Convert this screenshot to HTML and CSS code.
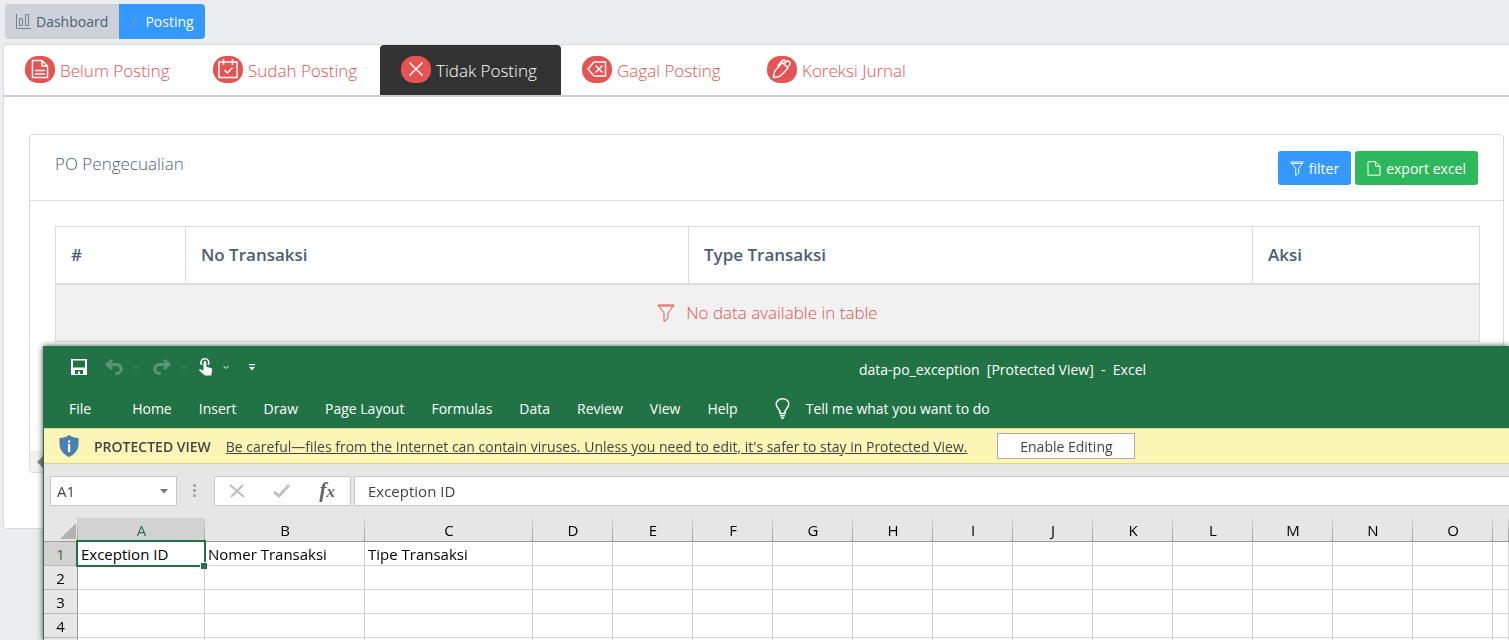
FILE: index.html
```
<!DOCTYPE html>
<html lang="id">
<head>
<meta charset="utf-8">
<title>Posting</title>
<link rel="stylesheet" href="styles.css">
</head>
<body>
<nav class="breadcrumb" aria-label="Breadcrumb">
  <a class="crumb" href="#">
    <svg class="crumb-icon" width="15" height="15" viewBox="0 0 15 15"><path d="M.5 0v14.5H15M3.500 4.500h3v7h-3zM9.500 .5h3v11h-3z"/></svg>
    Dashboard</a>
  <a class="crumb crumb-active" href="#"><span class="slash">/</span>Posting</a>
</nav>

<main class="panel">
  <nav class="tabs">
    <a class="tab" href="#"><span class="pill"><svg width="20" height="20" viewBox="0 0 20 20"><path d="M2.500 1.500h9.500l5.500 5.500v11.500h-15zM12 1.500v5.500h5.500M5 11.500h10M5 15h10"/></svg></span>Belum Posting</a>
    <a class="tab" href="#"><span class="pill"><svg width="20" height="20" viewBox="0 0 20 20"><path d="M1 3h18v15.500h-18zM5.500 0v6M14.500 0v6M6.500 11l3 3 5-5.500"/></svg></span>Sudah Posting</a>
    <a class="tab tab-active" href="#" aria-current="page"><span class="pill"><svg width="20" height="20" viewBox="0 0 20 20"><path d="M3.500 3.500l13 13M16.500 3.500l-13 13"/></svg></span>Tidak Posting</a>
    <a class="tab" href="#"><span class="pill"><svg width="20" height="20" viewBox="0 0 20 20"><path d="M7 3h11.500v14h-11.500l-6-7zM8.500 6.500l7 7M15.500 6.500l-7 7"/></svg></span>Gagal Posting</a>
    <a class="tab" href="#"><span class="pill"><svg width="20" height="20" viewBox="0 0 20 20"><path d="M1.500 18.500c0-4 1-6.500 3-8.500l6-6.500 5.500 5.500-6 6.500c-2 2-4.500 3-8.500 3zM12 5l2-2.200c2.300-2 5.500 1 3.300 3.400L15 8.200M5.500 7l5-5.500c.8-.8 1.500-.8 2.500 0l1 1"/></svg></span>Koreksi Jurnal</a>
  </nav>

  <section class="card">
    <header class="card-head">
      <h1 class="card-title">PO Pengecualian</h1>
      <div class="actions">
        <button class="btn btn-blue" type="button"><svg width="14" height="15" viewBox="0 0 14 15"><path d="M.7 1h12.600l-4.600 6.500v4.500l-3 2.300v-6.800zM2 2.500h10"/></svg>filter</button>
        <button class="btn btn-green" type="button"><svg width="14" height="15" viewBox="0 0 14 15"><path d="M1 .7h7.500l4.500 4.500v9h-12zM8.500 .7v4.500h4.500"/></svg>export excel</button>
      </div>
    </header>
    <div class="card-body">
      <table class="data">
        <colgroup><col class="c-no"><col class="c-trx"><col class="c-type"><col></colgroup>
        <thead><tr><th>#</th><th>No Transaksi</th><th>Type Transaksi</th><th>Aksi</th></tr></thead>
        <tbody><tr><td colspan="4"><div class="empty"><svg width="18" height="18" viewBox="0 0 18 18"><path d="M1 1h16l-6 8v5.500l-4 3v-8.500zM2 2h14"/></svg>No data available in table</div></td></tr></tbody>
      </table>
    </div>
    <div class="scroll"><svg width="6" height="12" viewBox="0 0 6 12"><path d="M6 0v12L0 6z"/></svg></div>
  </section>
</main>

<section class="excel" aria-label="Excel">
  <div class="titlebar">
    <div class="quick">
      <svg class="q-save" width="16" height="16" viewBox="0 0 16 16"><path fill-rule="evenodd" d="M0 0h16v16h-16zM2 1.500v7h12v-7zM4 11v4h3v-2.500h2v2.500h3v-4z"/></svg>
      <svg class="q-line dim q-undo" width="18" height="16" viewBox="0 0 18 16"><path d="M7 1L2 5.500 7 10M2.500 5.500h9c6.500 0 6 9 0 9h-1"/></svg>
      <svg class="q-chev dim" width="6" height="5" viewBox="0 0 6 5"><path d="M.5 1L3 3.500 5.500 1"/></svg>
      <svg class="q-line dim q-redo" width="18" height="16" viewBox="0 0 18 16"><path d="M11 1l5 4.500L11 10M15.500 5.500h-9c-6.500 0-6 9 0 9h1"/></svg>
      <svg class="q-chev dim" width="6" height="5" viewBox="0 0 6 5"><path d="M.5 1L3 3.500 5.500 1"/></svg>
      <svg class="q-touch" width="14" height="18" viewBox="0 0 14 18"><path d="M4.500 4.500c0-2 2.800-2 2.800 0v4.300l4.500 1.200c1 .3 1.500 1 1.300 2l-.9 5.500h-6.200L.5 12.800c-.8-1 .4-2 1.500-1.400l2.500 1.400z"/><path class="ring" d="M2.700 6.800C.5 3.500 3 .8 5.900.8s5.300 2.700 3.200 6"/></svg>
      <svg class="q-chev" width="6" height="5" viewBox="0 0 6 5"><path d="M.5 1L3 3.500 5.500 1"/></svg>
      <svg class="q-more" width="6" height="7" viewBox="0 0 6 7"><path d="M0 0h6v1.200h-6zM0 3h6L3 6.500z"/></svg>
    </div>
    <p class="doc">data-po_exception&nbsp; [Protected View]&nbsp; -&nbsp; Excel</p>
  </div>
  <nav class="ribbon">
    <a class="file" href="#">File</a><a href="#">Home</a><a href="#">Insert</a><a href="#">Draw</a><a href="#">Page Layout</a><a href="#">Formulas</a><a href="#">Data</a><a href="#">Review</a><a href="#">View</a><a href="#">Help</a>
    <a class="tell" href="#"><svg width="15" height="21" viewBox="0 0 15 21"><path d="M5 15.500v-2c0-2-3.800-3.500-3.800-7.300C1.200 3 4 .8 7.500.8s6.300 2.200 6.300 5.400c0 3.800-3.800 5.300-3.800 7.300v2zM5 17.800h5M6 20h3"/></svg>Tell me what you want to do</a>
  </nav>
  <div class="notice">
    <svg width="20" height="22" viewBox="0 0 20 22"><path fill="#4a7fb5" d="M10 0c2.500 2 6 3 9.500 3v6c0 6-4 10.500-9.500 13C4.500 19.500.5 15 .5 9V3c3.500 0 7-1 9.500-3z"/><path fill="#fff" d="M9 5.500h2.200v2.200H9zM9 9h2.200v8H9z"/></svg>
    <strong>PROTECTED VIEW</strong>
    <a href="#">Be careful—files from the Internet can contain viruses. Unless you need to edit, it's safer to stay in Protected View.</a>
    <button type="button">Enable Editing</button>
  </div>
  <div class="formula">
    <div class="namebox"><input aria-label="Name Box" value="A1"><svg width="8" height="5" viewBox="0 0 8 5"><path fill="#777" d="M0 0h8L4 4.500z"/></svg></div>
    <svg class="grip" width="4" height="14" viewBox="0 0 4 14"><path fill="#aaa" d="M0 0h3v3h-3zM0 5h3v3h-3zM0 10h3v3h-3z"/></svg>
    <div class="fx">
      <svg width="16" height="14" viewBox="0 0 16 14"><path d="M1 1l14 12M14 1L2 13" stroke="#bdbdbd" stroke-width="2" fill="none"/></svg>
      <svg width="18" height="14" viewBox="0 0 18 14"><path d="M1 8l5 4L16 1" stroke="#c3c3c3" stroke-width="3" fill="none"/></svg>
      <span class="fx-label">f<small>x</small></span>
    </div>
    <input class="fbar" aria-label="Formula Bar" value="Exception ID">
  </div>
  <table class="sheet">
    <colgroup><col class="s-row"><col class="s-a"><col class="s-b"><col class="s-c"><col span="12" class="s-n"><col></colgroup>
    <thead><tr><th class="corner"><svg width="16" height="16" viewBox="0 0 16 16"><path fill="#b2b2b2" d="M16 0v16H0z"/></svg></th><th class="sel">A</th><th>B</th><th>C</th><th>D</th><th>E</th><th>F</th><th>G</th><th>H</th><th>I</th><th>J</th><th>K</th><th>L</th><th>M</th><th>N</th><th>O</th><th></th></tr></thead>
    <tbody>
      <tr><th class="sel">1</th><td class="cursor">Exception ID</td><td>Nomer Transaksi</td><td>Tipe Transaksi</td><td></td><td></td><td></td><td></td><td></td><td></td><td></td><td></td><td></td><td></td><td></td><td></td><td></td></tr>
      <tr><th>2</th><td></td><td></td><td></td><td></td><td></td><td></td><td></td><td></td><td></td><td></td><td></td><td></td><td></td><td></td><td></td><td></td></tr>
      <tr><th>3</th><td></td><td></td><td></td><td></td><td></td><td></td><td></td><td></td><td></td><td></td><td></td><td></td><td></td><td></td><td></td><td></td></tr>
      <tr><th>4</th><td></td><td></td><td></td><td></td><td></td><td></td><td></td><td></td><td></td><td></td><td></td><td></td><td></td><td></td><td></td><td></td></tr>
      <tr><th></th><td></td><td></td><td></td><td></td><td></td><td></td><td></td><td></td><td></td><td></td><td></td><td></td><td></td><td></td><td></td><td></td></tr>
    </tbody>
  </table>
</section>
</body>
</html>
```
FILE: styles.css
```
* { box-sizing: border-box; }
body {
  margin: 0;
  padding: 4px 0 0 3px;
  background: #ebecee;
  color: #4f5d73;
  font-family: "Open Sans", "Noto Sans", sans-serif;
  font-size: 14px;
}
a { color: inherit; text-decoration: none; }
button, input { font: inherit; color: inherit; }
svg { flex: none; display: block; }

/* Breadcrumb */
.breadcrumb { display: flex; margin-left: 2px; height: 35px; }
.crumb {
  display: flex;
  align-items: center;
  gap: 5px;
  padding: 0 11px;
  background: #ced2d8;
  border-radius: 4px 0 0 4px;
}
.crumb-icon { fill: none; stroke: #768192; }
.crumb-active { gap: 10px; background: #39f; color: #fff; border-radius: 0 4px 4px 0; }
.slash { color: #8a93a2; }

/* Page panel and tabs */
.panel {
  margin-top: 5px;
  padding-bottom: 55px;
  background: #fff;
  border: 1px solid #d8dbe0;
  border-right: 0;
  border-radius: 4px 0 0 4px;
}
.tabs {
  display: grid;
  grid-template-columns: 188px 188px 181px 185px 185px;
  height: 52px;
  margin-left: -1px;
  padding-left: 1px;
  border-bottom: 2px solid #c8ccd3;
}
.tab {
  display: flex;
  align-items: center;
  gap: 5px;
  padding: 1px 0 0 21px;
  color: #e55353;
  font-size: 17px;
  font-weight: 300;
}
.tab-active { background: #333; color: #fff; border-radius: 4px 4px 0 0; }
.pill {
  display: flex;
  align-items: center;
  justify-content: center;
  width: 30px;
  height: 27px;
  margin-bottom: 3px;
  border-radius: 13px;
  background: #e55353;
}
.pill svg { fill: none; stroke: #fff; stroke-width: 1.5; }

/* Card */
.card { margin: 37px 5px 0 25px; border: 1px solid #d8dbe0; border-radius: 4px; }
.card-head {
  display: flex;
  justify-content: space-between;
  align-items: flex-start;
  height: 66px;
  padding: 16px 25px;
  border-bottom: 1px solid #d8dbe0;
}
.card-title { margin: 1px 0 0; font-size: 17px; line-height: 24px; font-weight: 300; }
.actions { display: flex; gap: 4px; }
.btn {
  display: flex;
  align-items: center;
  gap: 5px;
  height: 34px;
  padding: 0 12px;
  border: 0;
  border-radius: 3px;
  color: #fff;
}
.btn svg { fill: none; stroke: #fff; }
.btn-blue { background: #39f; }
.btn-green { background: #2eb85c; }
.card-body { height: 250px; padding: 25px 23px 0 25px; }
.data { width: 100%; table-layout: fixed; border-collapse: collapse; }
.data th, .data td { border: 1px solid #d8dbe0; }
.data th {
  height: 57px;
  padding: 0 15px;
  border-bottom-width: 2px;
  text-align: left;
  font-size: 17px;
  font-weight: 600;
}
.data td { height: 58px; background: #f1f1f1; }
.c-no { width: 130px; }
.c-trx { width: 503px; }
.c-type { width: 564px; }
.empty {
  display: flex;
  align-items: center;
  justify-content: center;
  gap: 11px;
  color: #e55353;
  font-size: 17px;
  font-weight: 300;
}
.empty svg { fill: none; stroke: #e55353; }
.scroll { display: flex; align-items: center; height: 21px; padding-left: 7px; background: #f1f1f1; }
.scroll svg { fill: #8a8a8a; }

/* Spreadsheet window */
.excel {
  position: fixed;
  top: 346px;
  right: 0;
  bottom: 0;
  left: 43px;
  overflow: hidden;
  border-left: 1px solid #217346;
  background: #e6e6e6;
  box-shadow: 0 0 6px rgba(0, 0, 0, .7);
  color: #444;
  font-size: 14px;
  white-space: nowrap;
}
.titlebar, .ribbon { background: #217346; color: #fff; }
.titlebar { display: grid; grid-template-columns: 404px 1fr; align-items: center; height: 43px; }
.quick { display: flex; align-items: center; padding: 0 0 1px 27px; fill: #fff; }
.q-line { fill: none; stroke: #fff; stroke-width: 3; }
.q-chev { fill: none; stroke: #fff; margin: 0 14px 0 10px; }
.q-undo { margin-left: 18px; }
.q-touch { margin-left: -2px; }
.q-chev + .q-more { margin-left: 6px; }
.ring { fill: none; stroke: #fff; stroke-width: 1.5; }
.dim { opacity: .25; }
.doc { justify-self: center; margin: 4px 0 0; padding-left: 48px; }
.ribbon { display: flex; align-items: center; gap: 27px; height: 39px; padding-left: 25px; }
.file { margin-right: 14px; }
.tell { display: flex; align-items: center; gap: 16px; margin-left: 10px; }
.tell svg { fill: none; stroke: #fff; stroke-width: 1.5; }
.notice {
  display: flex;
  align-items: center;
  height: 36px;
  padding-left: 15px;
  background: #fcf6b6;
  border: solid #dbd68f;
  border-width: 1px 0;
}
.notice strong { margin: 0 15px; font-weight: 600; }
.notice a { text-decoration: underline; }
.notice button {
  width: 138px;
  height: 26px;
  margin-left: 30px;
  padding: 0;
  background: #fdfdfd;
  border: 1px solid #ababab;
}
.formula { display: flex; align-items: center; height: 54px; padding-left: 6px; font-size: 15px; }
.namebox, .fx, .fbar { height: 30px; background: #fdfdfd; border: 1px solid #c6c6c6; border-radius: 0; }
.namebox { display: flex; align-items: center; width: 127px; padding: 0 8px 0 6px; }
.namebox input { flex: 1; min-width: 0; padding: 0; border: 0; background: none; }
.grip { margin: 0 17px 0 16px; }
.fx { display: flex; align-items: center; justify-content: space-between; width: 137px; padding: 0 15px 0 14px; margin-right: 3px; }
.fx-label { font: italic 700 22px/24px "Liberation Serif", serif; color: #666; }
.fx-label small { font-size: 17px; }
.fbar { flex: 1; padding: 0 13px; border-right: 0; }

/* Grid of cells */
.sheet {
  width: 100%;
  table-layout: fixed;
  border-collapse: separate;
  border-spacing: 0;
  color: #000;
  font-size: 15px;
  line-height: 20px;
}
.s-row { width: 34px; }
.s-a { width: 127px; }
.s-b { width: 160px; }
.s-c { width: 168px; }
.s-n { width: 80px; }
.sheet th { height: 24px; padding: 0; font-weight: 400; }
.sheet thead th {
  border-bottom: 1px solid #9b9b9b;
  background: linear-gradient(#d6d6d6, #9b9b9b) right / 1px 100% no-repeat;
}
.sheet .corner svg { margin: 3px 2px 0 auto; }
.sheet tbody th { border-right: 1px solid #9b9b9b; border-bottom: 1px solid #b8b8b8; }
.sheet thead .sel, .sheet tbody .sel { background-color: #d2d2d2; color: #217346; }
.sheet td {
  height: 24px;
  padding: 0 3px;
  background: #fff;
  border: solid #d4d4d4;
  border-width: 0 1px 1px 0;
}
.cursor { position: relative; }
.cursor::before {
  content: "";
  position: absolute;
  inset: -2px;
  border: 2px solid #217346;
}
.cursor::after {
  content: "";
  position: absolute;
  right: -3px;
  bottom: -4px;
  width: 6px;
  height: 6px;
  border: solid #fff;
  border-width: 1px 0 0 1px;
  background: #217346;
}
```
